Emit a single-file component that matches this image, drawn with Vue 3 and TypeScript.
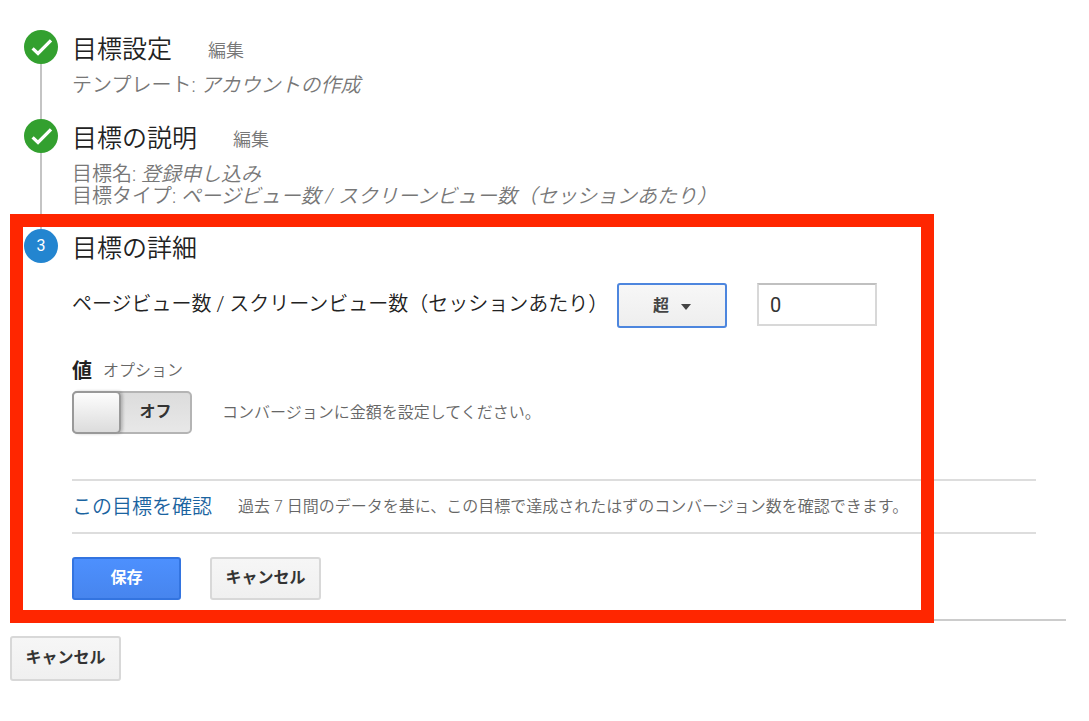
<script setup lang="ts">
import { ref } from 'vue'

interface Detail {
  label: string
  value: string
}

interface DoneStep {
  title: string
  details: Detail[]
}

const doneSteps: DoneStep[] = [
  {
    title: '目標設定',
    details: [{ label: 'テンプレート:', value: 'アカウントの作成' }],
  },
  {
    title: '目標の説明',
    details: [
      { label: '目標名:', value: '登録申し込み' },
      { label: '目標タイプ:', value: 'ページビュー数 / スクリーンビュー数（セッションあたり）' },
    ],
  },
]

const condition = ref('gt')
const threshold = ref('0')
const hasValue = ref(false)
</script>

<template>
  <main class="page">
    <ol class="steps">
      <li v-for="step in doneSteps" :key="step.title" class="step">
        <div class="rail">
          <svg class="badge" viewBox="0 0 34 34" aria-hidden="true">
            <circle cx="17" cy="17" r="17" fill="#33a02f" />
            <path d="M8.6 18.4 14 23.4 27 10.4" fill="none" stroke="#fff" stroke-width="3.3" />
          </svg>
        </div>
        <div class="content">
          <div class="heading">
            <h2>{{ step.title }}</h2>
            <a href="#" class="edit">編集</a>
          </div>
          <p v-for="d in step.details" :key="d.label" class="detail">
            {{ d.label }} <em>{{ d.value }}</em>
          </p>
        </div>
      </li>

      <li class="step current">
        <div class="rail"><span class="badge number">3</span></div>
        <div class="content">
          <div class="heading"><h2>目標の詳細</h2></div>

          <div class="condition">
            <label for="threshold">ページビュー数 / スクリーンビュー数（セッションあたり）</label>
            <div class="select">
              <select v-model="condition" aria-label="条件">
                <option value="gt">超</option>
              </select>
              <svg class="arrow" viewBox="0 0 10 6" aria-hidden="true">
                <path d="M0 0h10L5 6z" fill="#444" />
              </svg>
            </div>
            <input id="threshold" v-model="threshold" class="number-input" type="text" />
          </div>

          <div class="value-title">
            <label for="value-toggle">値</label>
            <span>オプション</span>
          </div>
          <div class="value-row">
            <label class="toggle">
              <input id="value-toggle" v-model="hasValue" type="checkbox" />
              <span class="knob"></span>
              <span class="state">オフ</span>
            </label>
            <span class="hint">コンバージョンに金額を設定してください。</span>
          </div>

          <div class="verify">
            <a href="#">この目標を確認</a>
            <span class="hint">過去 7 日間のデータを基に、この目標で達成されたはずのコンバージョン数を確認できます。</span>
          </div>

          <div class="actions">
            <button type="button" class="primary">保存</button>
            <button type="button">キャンセル</button>
          </div>
        </div>
        <div class="highlight"></div>
      </li>
    </ol>
    <button type="button" class="cancel-all">キャンセル</button>
  </main>
</template>

<style>
body {
  margin: 0;
  background: #fff;
}
</style>

<style scoped>
.page {
  box-sizing: border-box;
  padding: 30px 23px 30px 10px;
  color: #222;
  font-family: Roboto, "Noto Sans CJK JP", sans-serif;
  font-size: 20px;
  line-height: 22px;
}
.steps {
  margin: 0;
  padding: 0 0 0 14px;
  list-style: none;
  position: relative;
}
.step {
  display: flex;
  gap: 14px;
  min-height: 89px;
}
.rail {
  flex: none;
  width: 34px;
  background: linear-gradient(#c4c4c4, #c4c4c4) 16px 0 / 2px 100% no-repeat;
}
.current .rail {
  background: none;
}
.badge {
  display: block;
  width: 34px;
  height: 34px;
}
.number {
  border-radius: 50%;
  background: #2385d0;
  color: #fff;
  font-size: 16px;
  line-height: 34px;
  text-align: center;
}
.content {
  flex: 1;
  min-width: 0;
  padding: 1px 0 22px;
}
.heading {
  display: flex;
  align-items: center;
  gap: 36px;
  height: 38px;
  margin-bottom: 5px;
}
h2 {
  margin: 0;
  font-size: 25px;
  font-weight: 350;
  line-height: 38px;
}
.edit {
  padding-top: 2px;
  color: #777;
  font-size: 18px;
  font-weight: 350;
  text-decoration: none;
}
.detail {
  margin: 0;
  color: #777;
  font-weight: 350;
}
.current {
  position: relative;
}
.current .content {
  padding: 1px 30px 19px 0;
}
.current .heading {
  margin-bottom: 15px;
}
.condition {
  display: grid;
  grid-template-columns: 515px 110px 120px;
  column-gap: 30px;
  align-items: start;
  white-space: nowrap;
}
.condition label {
  font-weight: 350;
  line-height: 43px;
}
.select {
  position: relative;
}
select {
  display: block;
  box-sizing: border-box;
  width: 100%;
  height: 45px;
  padding: 0 0 0 34px;
  appearance: none;
  border: 2px solid #4d86de;
  border-radius: 3px;
  background: linear-gradient(#f7f7f7, #eee);
  color: #444;
  font: bold 16px Roboto, "Noto Sans CJK JP", sans-serif;
}
.arrow {
  position: absolute;
  top: 21px;
  right: 36px;
  width: 10px;
  height: 6px;
  pointer-events: none;
}
.number-input {
  box-sizing: border-box;
  width: 100%;
  height: 43px;
  padding: 0 11px;
  border: 2px solid #d8d8d8;
  border-top-color: #c0c0c0;
  border-radius: 0;
  background: #fff;
  color: #333;
  font: 20px Roboto, "Noto Sans CJK JP", sans-serif;
}
.value-title {
  display: flex;
  gap: 11px;
  margin: 32px 0 9px;
}
.value-title label {
  font-weight: bold;
}
.value-title span,
.hint {
  color: #666;
  font-size: 16px;
  font-weight: 350;
}
.value-row {
  display: flex;
  align-items: center;
  gap: 30px;
}
.toggle {
  position: relative;
  display: flex;
  box-sizing: border-box;
  width: 120px;
  height: 43px;
  border: 2px solid #b4b4b4;
  border-radius: 5px;
  background: linear-gradient(#dcdcdc, #e8e8e8);
}
.toggle input {
  position: absolute;
  inset: 0;
  width: 100%;
  height: 100%;
  margin: 0;
  opacity: 0;
}
.knob {
  box-sizing: border-box;
  width: 49px;
  margin: -2px 0 -2px -2px;
  border: 2px solid #999;
  border-radius: 5px;
  background: linear-gradient(#fdfdfd, #dcdcdc);
  box-shadow: 2px 0 3px rgba(0, 0, 0, 0.2);
}
.state {
  flex: 1;
  color: #333;
  font-size: 16px;
  font-weight: bold;
  line-height: 37px;
  text-align: center;
}
.verify {
  display: flex;
  align-items: center;
  gap: 26px;
  height: 51px;
  margin-top: 45px;
  border: solid #ddd;
  border-width: 2px 0;
  white-space: nowrap;
}
.verify a {
  color: #1a63a0;
  font-weight: 350;
  text-decoration: none;
}
.actions {
  display: flex;
  gap: 29px;
  margin-top: 23px;
}
button {
  box-sizing: border-box;
  min-width: 111px;
  height: 43px;
  padding: 0 12px 5px;
  border: 2px solid #d8d8d8;
  border-radius: 3px;
  background: linear-gradient(#f6f6f6, #f0f0f0);
  color: #333;
  font: bold 16px Roboto, "Noto Sans CJK JP", sans-serif;
}
button.primary {
  min-width: 109px;
  border-color: #3374e0;
  background: linear-gradient(#4d90fe, #4785ee);
  color: #fff;
}
.page > .cancel-all {
  display: block;
  height: 45px;
  margin-top: 15px;
}
.steps::after {
  content: "";
  display: block;
  height: 2px;
  margin-left: -14px;
  background: #ccc;
}
.highlight {
  position: absolute;
  top: -15px;
  right: 132px;
  bottom: -4px;
  left: -14px;
  border: 13px solid #ff2600;
  pointer-events: none;
}
</style>
